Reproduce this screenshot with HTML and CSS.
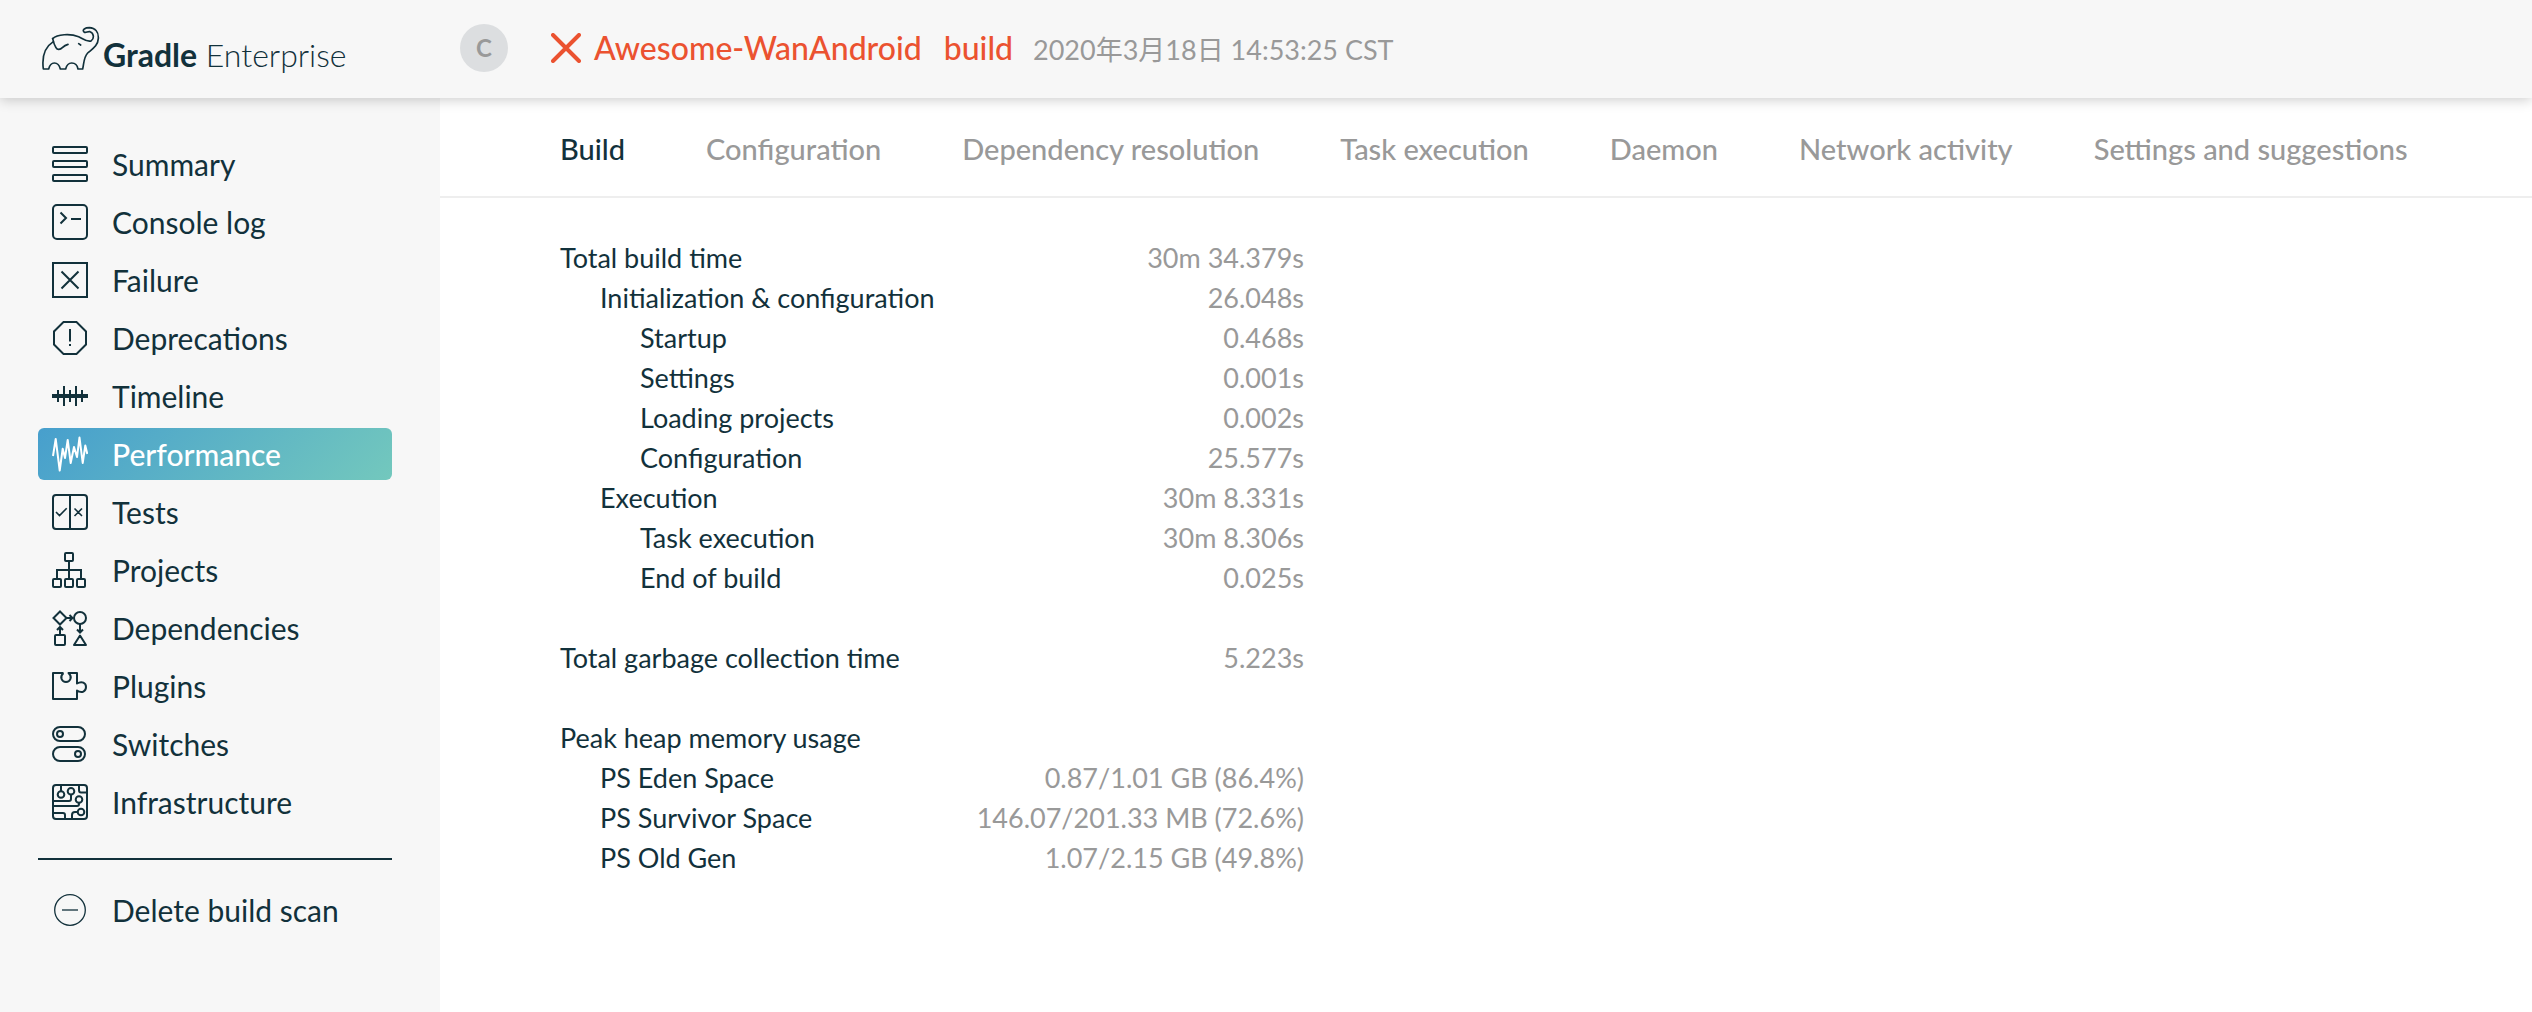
FILE: index.html
```html
<!DOCTYPE html>
<html lang="en">
<head>
<meta charset="utf-8">
<meta name="viewport" content="width=device-width, initial-scale=1">
<title>Performance | Awesome-WanAndroid | Gradle Enterprise</title>
<link rel="stylesheet" href="styles.css">
</head>
<body>
<header class="header">
  <a class="brand" href="#">
    <svg class="brand-mark" viewBox="63 69 177 135" aria-hidden="true">
      <path d="M98 107C112 94 150 91 176 101C192 109 204 119 214 113C223 107 222 90 210 86C203 84 198 91 192 87C185 80 196 74 208 74C226 75 236 88 235 106C234 130 215 139 203 150C191 162 192 182 188 198H174C172 186 165 180 155 180C146 180 140 186 137 198H121C118 186 112 180 103 180C94 180 89 186 86 198H70C65 160 75 132 100 116"/>
      <path d="M98 107C100 116 104 128 108 134C112 142 121 140 127 134C133 128 136 126 144 124M176 122L182 126"/>
    </svg>
    <span class="brand-name"><strong>Gradle</strong> Enterprise</span>
  </a>
  <span class="avatar">C</span>
  <div class="scan">
    <h1 class="scan-title">
      <svg class="scan-status" viewBox="0 0 30 30" role="img" aria-label="Failed"><path d="M2 2L28 28M28 2L2 28"/></svg>
      <span class="scan-project">Awesome-WanAndroid</span>
      <span class="scan-task">build</span>
    </h1>
    <time class="scan-date" datetime="2020-03-18T14:53:25+08:00">2020年3月18日 14:53:25 CST</time>
  </div>
</header>
<div class="layout">
  <nav class="sidebar" aria-label="Build scan">
    <ul class="menu">
      <li><a class="menu-item" href="#"><svg class="icon" viewBox="0 0 36 36" aria-hidden="true"><rect x="1" y="1" width="34" height="6" rx="1"/><rect x="1" y="15" width="34" height="6" rx="1"/><rect x="1" y="29" width="34" height="6" rx="1"/></svg>Summary</a></li>
      <li><a class="menu-item" href="#"><svg class="icon" viewBox="0 0 36 36" aria-hidden="true"><rect x="1" y="1" width="34" height="34" rx="4"/><path d="M8.5 8.5L14 14L8.5 19.5M19 15H29"/></svg>Console log</a></li>
      <li><a class="menu-item" href="#"><svg class="icon" viewBox="0 0 36 36" aria-hidden="true"><rect x="1" y="1" width="34" height="34"/><path d="M9.5 9.5L26.5 26.5M26.5 9.5L9.5 26.5"/></svg>Failure</a></li>
      <li><a class="menu-item" href="#"><svg class="icon" viewBox="0 0 36 36" aria-hidden="true"><path d="M11.500 2H24.500L34 11.500V24.500L24.500 34H11.500L2 24.500V11.500ZM18 9V21.500M18 24V26"/></svg>Deprecations</a></li>
      <li><a class="menu-item" href="#"><svg class="icon" viewBox="0 0 36 36" aria-hidden="true"><path stroke-width="4" d="M0 18H36"/><path d="M6 12V24M12 8V28M18 12V24M24 8V28M30 12V24"/></svg>Timeline</a></li>
      <li><a class="menu-item menu-item-active" href="#" aria-current="page"><svg class="icon" viewBox="0 0 36 36" aria-hidden="true"><path stroke-linejoin="round" d="M1 20L3.700 3L7.700 34.500L10.700 12.700L13 22L15.700 4L18.700 27L22 11L25 21L27.500 1.500L30.700 27L33.300 9.500L35.300 18"/></svg>Performance</a></li>
      <li><a class="menu-item" href="#"><svg class="icon" viewBox="0 0 36 36" aria-hidden="true"><rect x="1" y="1" width="34" height="34" rx="3"/><path d="M18 1V35"/><path stroke-width="1.600" d="M4 18L7.500 21.500L14.700 14.300M22.500 14.500L30 22M30 14.500L22.500 22"/></svg>Tests</a></li>
      <li><a class="menu-item" href="#"><svg class="icon" viewBox="0 0 36 36" aria-hidden="true"><rect x="13" y="1" width="8" height="8" rx="1"/><rect x="1" y="27" width="8" height="8" rx="1"/><rect x="13" y="27" width="8" height="8" rx="1"/><rect x="25" y="27" width="8" height="8" rx="1"/><path d="M17 9V27M5 27V18H29V27"/></svg>Projects</a></li>
      <li><a class="menu-item" href="#"><svg class="icon" viewBox="0 0 36 36" aria-hidden="true"><path d="M8 1.500L14.500 8L8 14.500L1.500 8Z"/><circle cx="28" cy="8" r="6"/><rect x="3" y="25" width="10" height="10" rx="1"/><path stroke-linejoin="round" d="M28 25.500L34 35H22Z"/><path d="M14 8H20M17.500 5L20.500 8L17.500 11M8 25V17M5 20L8 17L11 20M28 14V22M25 19.500L28 22.500L31 19.500"/></svg>Dependencies</a></li>
      <li><a class="menu-item" href="#"><svg class="icon" viewBox="0 0 36 36" aria-hidden="true"><path stroke-linejoin="round" d="M11.500 5H1V31H25V22.500C30 26 34 23 34 19C34 15 30 12.500 25 15.500V5H16.500C21 9 18 14 14 14C10 14 7 9 11.500 5"/></svg>Plugins</a></li>
      <li><a class="menu-item" href="#"><svg class="icon" viewBox="0 0 36 36" aria-hidden="true"><rect x="1" y="1" width="32" height="14" rx="7"/><circle cx="8" cy="8" r="3"/><rect x="1" y="21" width="32" height="14" rx="7"/><circle cx="26" cy="28" r="3"/></svg>Switches</a></li>
      <li><a class="menu-item" href="#"><svg class="icon" viewBox="0 0 36 36" aria-hidden="true"><rect x="1" y="1" width="34" height="34" rx="3"/><circle cx="9" cy="10.500" r="3.300"/><circle cx="19" cy="7.300" r="3.300"/><circle cx="27" cy="15.500" r="3.300"/><circle cx="29" cy="28" r="3.300"/><path d="M9 1V7M19 11V15Q19 17 17 17H1M27 19V20Q27 22 25 22H1M27 1V6Q27 8.500 29 8.500H35M1 29H11Q13 29 13 31V35M20 35V31Q20 28 23 28H26"/></svg>Infrastructure</a></li>
    </ul>
    <hr class="menu-rule">
    <button class="menu-item" type="button"><svg class="icon" viewBox="0 0 36 36" aria-hidden="true"><g stroke-width="1.300"><circle cx="18" cy="18" r="15.300"/><path d="M10 18H26"/></g></svg>Delete build scan</button>
  </nav>
  <main class="content">
    <nav class="tabs" aria-label="Performance">
      <a class="tab tab-active" href="#" aria-current="page">Build</a>
      <a class="tab" href="#">Configuration</a>
      <a class="tab" href="#">Dependency resolution</a>
      <a class="tab" href="#">Task execution</a>
      <a class="tab" href="#">Daemon</a>
      <a class="tab" href="#">Network activity</a>
      <a class="tab" href="#">Settings and suggestions</a>
    </nav>
    <table class="metrics">
      <tbody>
        <tr><th scope="row">Total build time</th><td>30m 34.379s</td></tr>
        <tr><th scope="row" class="level-1">Initialization &amp; configuration</th><td>26.048s</td></tr>
        <tr><th scope="row" class="level-2">Startup</th><td>0.468s</td></tr>
        <tr><th scope="row" class="level-2">Settings</th><td>0.001s</td></tr>
        <tr><th scope="row" class="level-2">Loading projects</th><td>0.002s</td></tr>
        <tr><th scope="row" class="level-2">Configuration</th><td>25.577s</td></tr>
        <tr><th scope="row" class="level-1">Execution</th><td>30m 8.331s</td></tr>
        <tr><th scope="row" class="level-2">Task execution</th><td>30m 8.306s</td></tr>
        <tr><th scope="row" class="level-2">End of build</th><td>0.025s</td></tr>
      </tbody>
      <tbody>
        <tr><th scope="row">Total garbage collection time</th><td>5.223s</td></tr>
      </tbody>
      <tbody>
        <tr><th scope="row">Peak heap memory usage</th><td></td></tr>
        <tr><th scope="row" class="level-1">PS Eden Space</th><td>0.87/1.01 GB (86.4%)</td></tr>
        <tr><th scope="row" class="level-1">PS Survivor Space</th><td>146.07/201.33 MB (72.6%)</td></tr>
        <tr><th scope="row" class="level-1">PS Old Gen</th><td>1.07/2.15 GB (49.8%)</td></tr>
      </tbody>
    </table>
  </main>
</div>
</body>
</html>
```
FILE: styles.css
```css
:root {
  --ink: #12313b;
  --muted: #999;
  --failed: #eb5230;
  --panel: #f7f7f7;
  --medium: "Lato Medium", Lato, "Noto Sans CJK SC", sans-serif;
}

* {
  box-sizing: border-box;
}

body {
  margin: 0;
  min-height: 100vh;
  display: flex;
  flex-direction: column;
  background: #fff;
  color: var(--ink);
  font-family: Lato, "Noto Sans CJK SC", sans-serif;
  font-size: 27px;
}

a {
  color: inherit;
  text-decoration: none;
}

/* Header */

.header {
  position: relative;
  display: flex;
  align-items: center;
  height: 98px;
  padding-bottom: 2px;
  background: var(--panel);
  box-shadow: 0 2px 12px rgba(0, 0, 0, 0.2);
}

.brand {
  flex: 0 0 460px;
  display: flex;
  align-items: flex-end;
  gap: 3px;
  padding-left: 41px;
}

.brand-mark {
  width: 59px;
  height: 45px;
  fill: none;
  stroke: var(--ink);
  stroke-width: 5;
  stroke-linecap: round;
  stroke-linejoin: round;
}

.brand-name {
  font-size: 32px;
  font-weight: 300;
  line-height: 32px;
}

.brand-name strong {
  font-weight: 700;
}

.avatar {
  width: 48px;
  border-radius: 50%;
  background: #dcdee0;
  color: var(--muted);
  font-size: 24px;
  font-weight: 700;
  line-height: 48px;
  text-align: center;
}

.scan {
  display: flex;
  align-items: baseline;
  gap: 20px;
  margin-left: 43px;
}

.scan-title {
  display: flex;
  align-items: baseline;
  margin: 0;
  color: var(--failed);
  font-family: var(--medium);
  font-size: 32px;
  font-weight: 500;
  line-height: 48px;
}

.scan-status {
  align-self: center;
  width: 30px;
  height: 30px;
  margin-right: 13px;
  fill: none;
  stroke: currentColor;
  stroke-width: 4;
  stroke-linecap: round;
}

.scan-project {
  margin-right: 22px;
}

.scan-date {
  color: var(--muted);
  line-height: 40px;
}

/* Sidebar */

.layout {
  flex: 1;
  display: flex;
}

.sidebar {
  flex: 0 0 440px;
  padding: 40px 48px 40px 38px;
  background: var(--panel);
}

.menu {
  display: grid;
  gap: 6px;
  margin: 0;
  padding: 0;
  list-style: none;
}

.menu-item {
  display: flex;
  align-items: center;
  gap: 24px;
  width: 100%;
  height: 52px;
  padding: 0 14px;
  border: 0;
  border-radius: 6px;
  background: none;
  color: inherit;
  font: inherit;
  font-size: 30px;
  cursor: pointer;
}

.menu-item-active {
  background: linear-gradient(135deg, #479fcd, #73c8bd);
  color: #fff;
  font-family: var(--medium);
  font-weight: 500;
}

.icon {
  flex: none;
  width: 36px;
  height: 36px;
  fill: none;
  stroke: currentColor;
  stroke-width: 2;
}

.menu-rule {
  margin: 30px 0 24px;
  border: 0;
  border-top: 2px solid var(--ink);
}

/* Content */

.content {
  flex: 1;
}

.tabs {
  display: flex;
  gap: 81px;
  height: 100px;
  padding: 2px 120px 0;
  border-bottom: 2px solid #eee;
  color: var(--muted);
  font-family: var(--medium);
  font-size: 29px;
  font-weight: 500;
  line-height: 98px;
  white-space: nowrap;
}

.tab-active {
  color: var(--ink);
}

.metrics {
  width: 744px;
  margin: 40px 120px;
  border-collapse: collapse;
}

.metrics th,
.metrics td {
  height: 40px;
  padding: 0;
  line-height: 40px;
  white-space: nowrap;
}

.metrics th {
  font-weight: 400;
  text-align: left;
}

.metrics td {
  color: var(--muted);
  text-align: right;
}

.metrics .level-1 {
  padding-left: 40px;
}

.metrics .level-2 {
  padding-left: 80px;
}

.metrics tbody + tbody::before {
  content: "";
  display: table-row;
  height: 40px;
}
```
